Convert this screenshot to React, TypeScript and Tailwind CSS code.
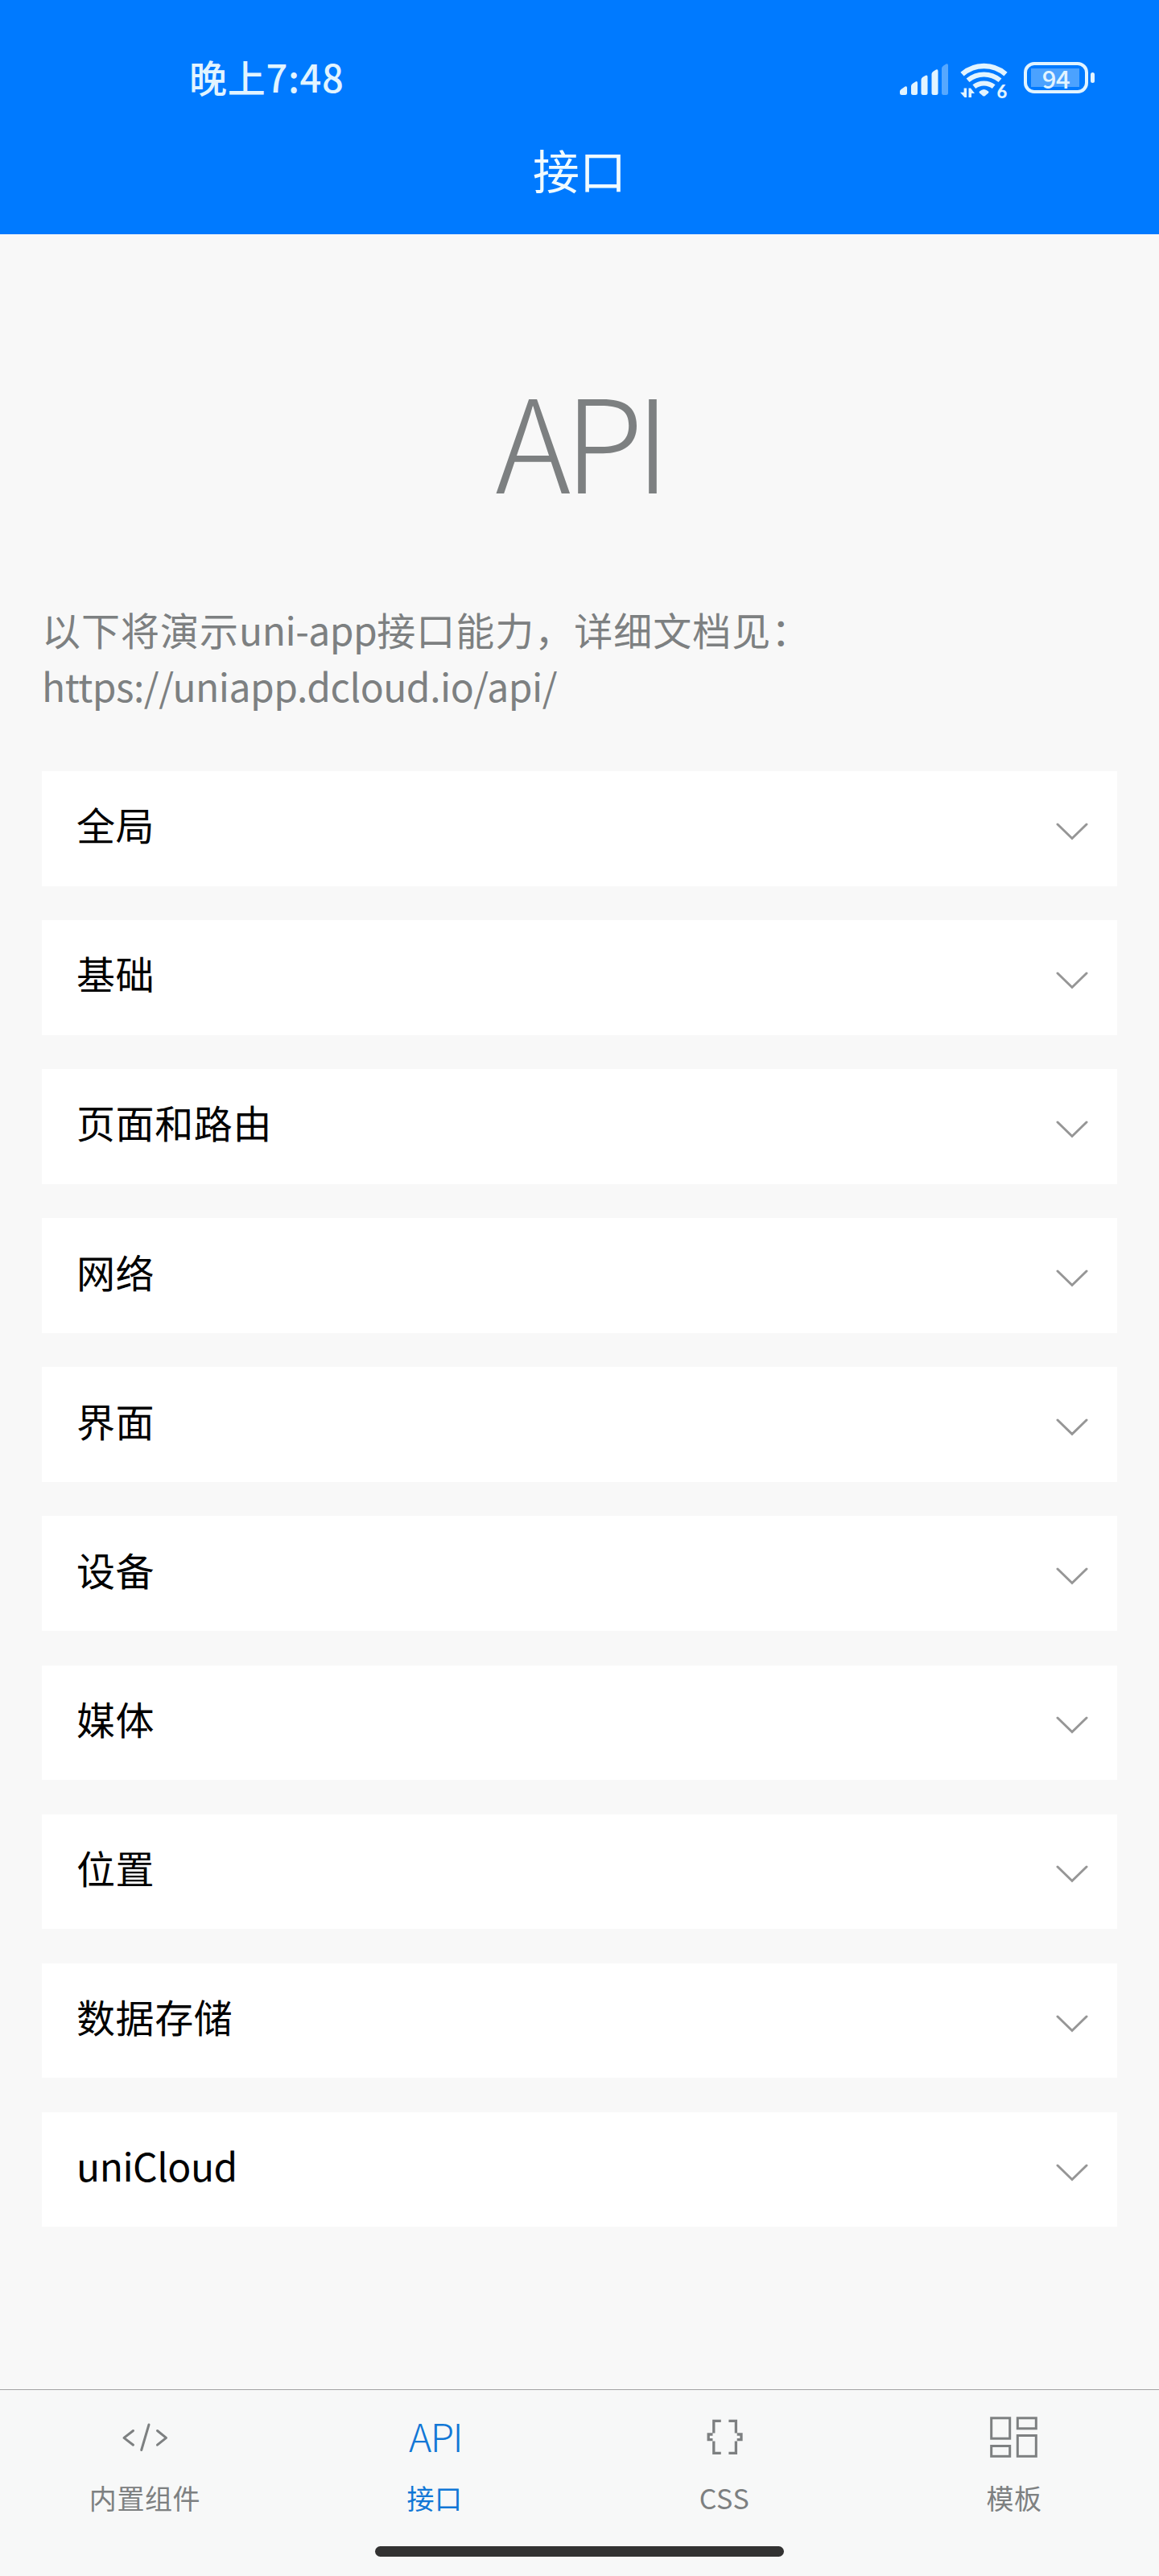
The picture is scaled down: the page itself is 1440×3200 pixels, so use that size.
import type { ReactNode } from 'react';

const panels = ['全局', '基础', '页面和路由', '网络', '界面', '设备', '媒体', '位置', '数据存储', 'uniCloud'];

function SignalIcon() {
  return (
    <svg className="w-[62px] h-[42px]" viewBox="0 0 62 42" fill="#e2f4ff">
      <path d="M0 36.5 Q0 35 1.5 34 L6.5 30.6 Q9 29.5 9 32 V38.5 Q9 41 6.5 41 H2.5 Q0 41 0 38.5 Z" />
      <path d="M14 30 Q14 28 16 26.7 L19.5 24.4 Q22 23.4 22 26 V38.5 Q22 41 19.5 41 H16.5 Q14 41 14 38.5 Z" />
      <path d="M26.5 22 Q26.5 20 28.5 18.8 L32 16.8 Q34.5 15.8 34.5 18.4 V38.5 Q34.5 41 32 41 H29 Q26.5 41 26.5 38.5 Z" />
      <path d="M39.5 15 Q39.5 13 41.5 11.8 L45 9.6 Q47.5 8.6 47.5 11.4 V38.5 Q47.5 41 45 41 H42 Q39.5 41 39.5 38.5 Z" />
      <path
        d="M52 8 Q52 6 54 4.8 L57.5 2.4 Q60 1.4 60 4.2 V38.5 Q60 41 57.5 41 H54.5 Q52 41 52 38.5 Z"
        opacity="0.38"
      />
    </svg>
  );
}

function WifiIcon() {
  return (
    <svg className="w-[66px] h-[54px]" viewBox="0 0 66 54">
      <g fill="none" stroke="#e2f4ff">
        <path d="M2.5 15.2 A41 41 0 0 1 56.5 15.2" strokeWidth="6.4" />
        <path d="M9.5 22.8 A31 31 0 0 1 49.5 22.8" strokeWidth="6" />
        <path d="M17.3 30.7 A19.5 19.5 0 0 1 41.7 30.7" strokeWidth="6" />
      </g>
      <path d="M24 36.5 Q29.5 31.5 35 36.5 Q36 37.6 35 38.6 L31 42 Q29.5 43 28 42 L24 38.6 Q23 37.6 24 36.5 Z" fill="#e2f4ff" />
      <g fill="#e2f4ff">
        <path d="M4.6 32.5 H8 V44 H5.5 L0 37.8 H4.6 Z" />
        <path d="M10.5 32.5 H13 L18 39 H14 V44 H10.5 Z" />
      </g>
      <text x="45.5" y="45" fontFamily="Lato" fontWeight="900" fontSize="22" fill="#e2f4ff">
        6
      </text>
    </svg>
  );
}

function Battery() {
  return (
    <div className="flex items-center gap-[3px]">
      <div className="relative flex items-center justify-center w-[80px] h-[39px] rounded-[13px] border-[4px] border-[#e2f4ff]">
        <div className="absolute left-[5px] top-[4px] w-[60px] h-[23px] bg-[#4ba2ff]" />
        <span className="relative text-[31px] font-medium leading-none tracking-[-0.5px] text-[#e2f4ff]">94</span>
      </div>
      <div className="w-[5px] h-[13px] rounded-full bg-[#e2f4ff]" />
    </div>
  );
}

function Chevron() {
  return (
    <svg className="mt-[7px] w-[40px] h-[24px]" viewBox="0 0 40 24" fill="none" stroke="#969696" strokeWidth="3">
      <path d="M2 3 L20 20.5 L38 3" strokeLinecap="round" />
    </svg>
  );
}

function CodeIcon() {
  return (
    <svg className="w-[60px] h-[60px]" viewBox="0 0 60 60" fill="none" stroke="#7d8081" strokeWidth="3" strokeLinecap="round" strokeLinejoin="round">
      <path d="M15.5 21.5 L4 30.4 L15.5 39.2" />
      <path d="M35 14 L25.7 45.5" />
      <path d="M45.5 21.5 L56.5 30.4 L45.5 39.2" />
    </svg>
  );
}

function BracesIcon() {
  return (
    <svg className="w-[60px] h-[60px]" viewBox="0 0 60 60" fill="none" stroke="#7d8081" strokeWidth="3.3">
      <path d="M25.8 9.3 H16.8 V24.5 M15.5 26 H10.2 V32.7 H15.5 M16.8 34.5 V49.3 H25.8" />
      <path d="M35.4 9.3 H44.4 V24.5 M45.7 26 H51 V32.7 H45.7 M44.4 34.5 V49.3 H35.4" />
    </svg>
  );
}

function TemplateIcon() {
  return (
    <svg className="w-[60px] h-[60px]" viewBox="0 0 60 60" fill="none" stroke="#7d8081" strokeWidth="3">
      <rect x="1.7" y="5.8" width="23" height="25.4" />
      <rect x="34.3" y="5.8" width="23" height="13" />
      <rect x="1.7" y="40.5" width="23" height="12.8" />
      <rect x="34.3" y="27.5" width="23" height="25.8" />
    </svg>
  );
}

interface TabProps {
  icon: ReactNode;
  label: string;
  active?: boolean;
}

function Tab({ icon, label, active }: TabProps) {
  return (
    <div className={`flex flex-1 flex-col items-center pt-[29px] ${active ? 'text-[#1177d6]' : 'text-[#7d8081]'}`}>
      <div className="flex h-[60px] items-center justify-center">{icon}</div>
      <span className="mt-[21px] text-[34px] leading-[48px] tracking-[0.6px]">{label}</span>
    </div>
  );
}

export default function App() {
  return (
    <div className="flex h-[3200px] w-[1440px] flex-col overflow-hidden bg-[#f8f8f8] font-['Noto_Sans_CJK_SC',sans-serif]">
      <header className="h-[291px] bg-[#007aff]">
        {/* Status bar */}
        <div className="flex h-[168px] items-start justify-between pl-[235px] pr-[80px] pt-[61px]">
          <span className="text-[47px] font-medium leading-[68px] tracking-[0.7px] text-[#e2f4ff]">晚上7:48</span>
          <div className="flex items-start pt-[16px]">
            <SignalIcon />
            <div className="ml-[13px]">
              <WifiIcon />
            </div>
            <div className="ml-[13px]">
              <Battery />
            </div>
          </div>
        </div>
        <h1 className="text-center text-[58px] leading-[84px] text-[#f0fbff]">接口</h1>
      </header>

      <main className="flex-1 px-[52px]">
        <div className="flex h-[441px] items-center justify-center pt-[62px]">
          <span className="pl-[8px] text-[160px] font-light leading-none text-[#7d8081]">
            <span className="tracking-[-8px]">A</span>
            <span className="tracking-[-10px]">P</span>I
          </span>
        </div>
        <p className="h-[226px] pt-[14px] text-[48px] leading-[70px] tracking-[1px] text-[#7d8081]">
          以下将演示<span className="tracking-[-0.5px]">uni-app</span>接口能力，详细文档见：
          <br />
          <span className="tracking-[-0.5px]">https://uniapp.dcloud.io/api/</span>
        </p>
        <div className="flex flex-col gap-[42.6px]">
          {panels.map((name) => (
            <div key={name} className="flex h-[142.5px] items-center justify-between bg-white pl-[43px] pr-[36px]">
              <span
                className={`pb-[12px] text-[48px] leading-[70px] text-black ${name === 'uniCloud' ? 'tracking-[-0.5px]' : 'tracking-[0.6px]'}`}
              >
                {name}
              </span>
              <Chevron />
            </div>
          ))}
        </div>
      </main>

      <footer className="h-[232px] border-t border-[#a3a3a3] bg-[#f7f8f8]">
        <nav className="flex h-[194px]">
          <Tab icon={<CodeIcon />} label="内置组件" />
          <Tab
            icon={<span className="pb-[6px] pl-[2px] text-[48px] font-light leading-none tracking-[-1.5px]">API</span>}
            label="接口"
            active
          />
          <Tab icon={<BracesIcon />} label="CSS" />
          <Tab icon={<TemplateIcon />} label="模板" />
        </nav>
        <div className="mx-auto h-[13px] w-[508px] rounded-full bg-[#323232]" />
      </footer>
    </div>
  );
}
